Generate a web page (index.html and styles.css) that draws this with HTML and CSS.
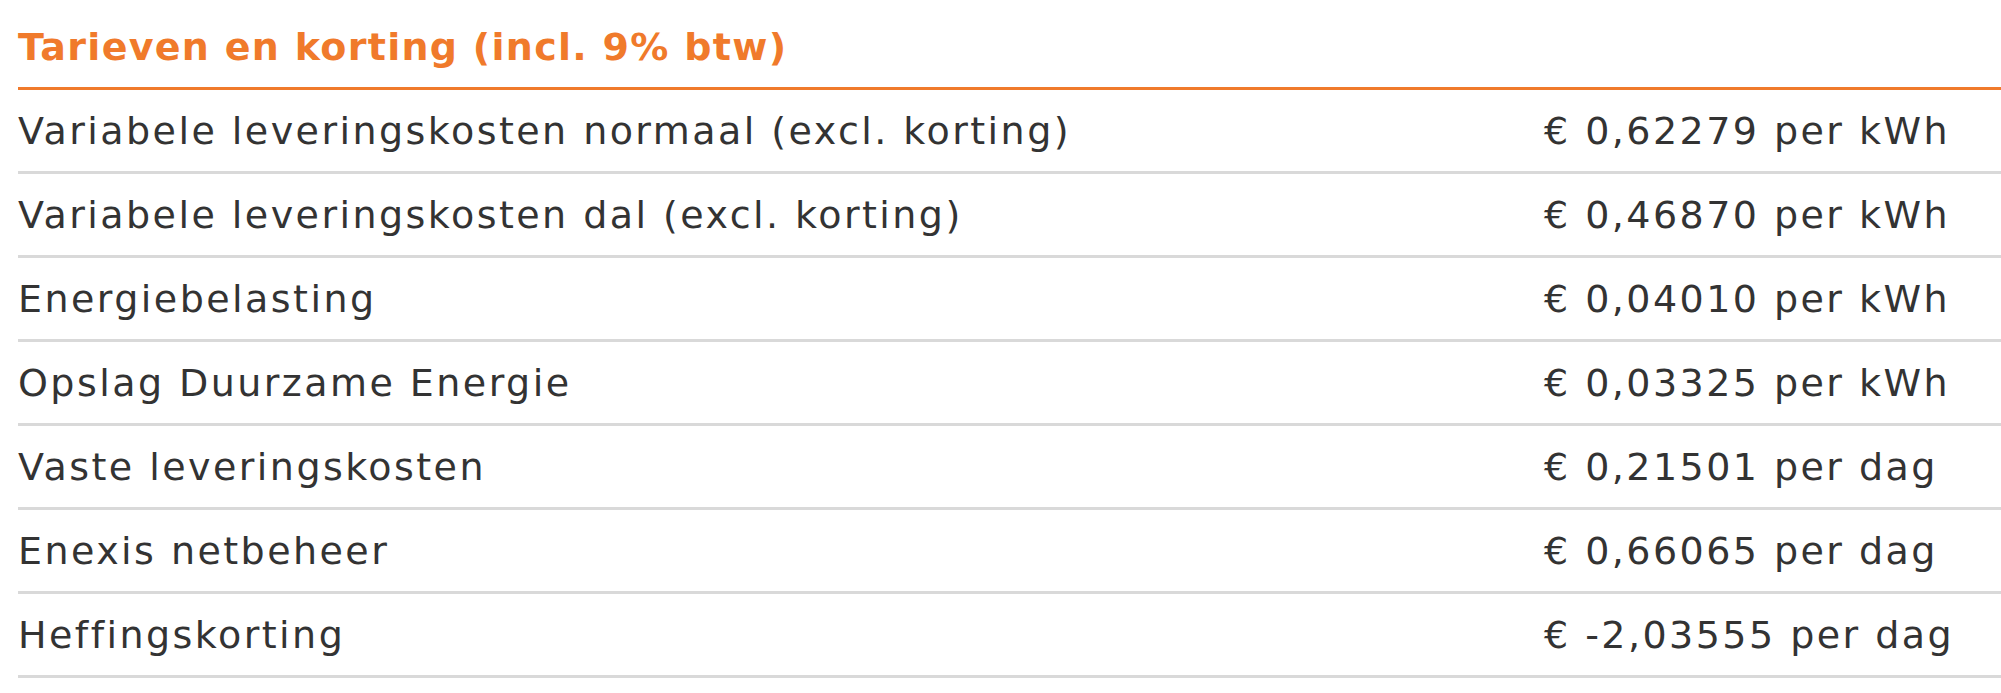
FILE: index.html
```html
<!DOCTYPE html>
<html lang="nl">
<head>
<meta charset="utf-8">
<title>Tarieven en korting</title>
<link rel="stylesheet" href="styles.css">
</head>
<body>
<section class="rates">
  <h2 class="rates-title">Tarieven en korting (incl. 9% btw)</h2>
  <div class="rates-list">
    <div class="rate-row"><span class="rate-label">Variabele leveringskosten normaal (excl. korting)</span><span class="rate-value">€ 0,62279 per kWh</span></div>
    <div class="rate-row"><span class="rate-label">Variabele leveringskosten dal (excl. korting)</span><span class="rate-value">€ 0,46870 per kWh</span></div>
    <div class="rate-row"><span class="rate-label">Energiebelasting</span><span class="rate-value">€ 0,04010 per kWh</span></div>
    <div class="rate-row"><span class="rate-label">Opslag Duurzame Energie</span><span class="rate-value">€ 0,03325 per kWh</span></div>
    <div class="rate-row"><span class="rate-label">Vaste leveringskosten</span><span class="rate-value">€ 0,21501 per dag</span></div>
    <div class="rate-row"><span class="rate-label">Enexis netbeheer</span><span class="rate-value">€ 0,66065 per dag</span></div>
    <div class="rate-row"><span class="rate-label">Heffingskorting</span><span class="rate-value">€ -2,03555 per dag</span></div>
  </div>
</section>
</body>
</html>
```

FILE: styles.css
```css
html, body {
  margin: 0;
  padding: 0;
  background: #ffffff;
}

.rates {
  padding-left: 18px;
  font-family: "DejaVu Sans", "Liberation Sans", sans-serif;
  color: #333333;
}

.rates-title {
  margin: 0;
  box-sizing: border-box;
  height: 90px;
  padding-top: 23px;
  font-size: 38px;
  font-weight: 700;
  line-height: 48px;
  letter-spacing: 1.3px;
  color: #f07a2b;
  border-bottom: 3px solid #f07a2b;
  white-space: nowrap;
}

.rate-row {
  display: grid;
  grid-template-columns: 1526px 1fr;
  align-items: center;
  height: 84px;
  box-sizing: border-box;
  border-bottom: 3px solid #d9d9d9;
  font-size: 38px;
  line-height: 40px;
  letter-spacing: 2.45px;
}

.rate-label,
.rate-value {
  white-space: nowrap;
}
```
